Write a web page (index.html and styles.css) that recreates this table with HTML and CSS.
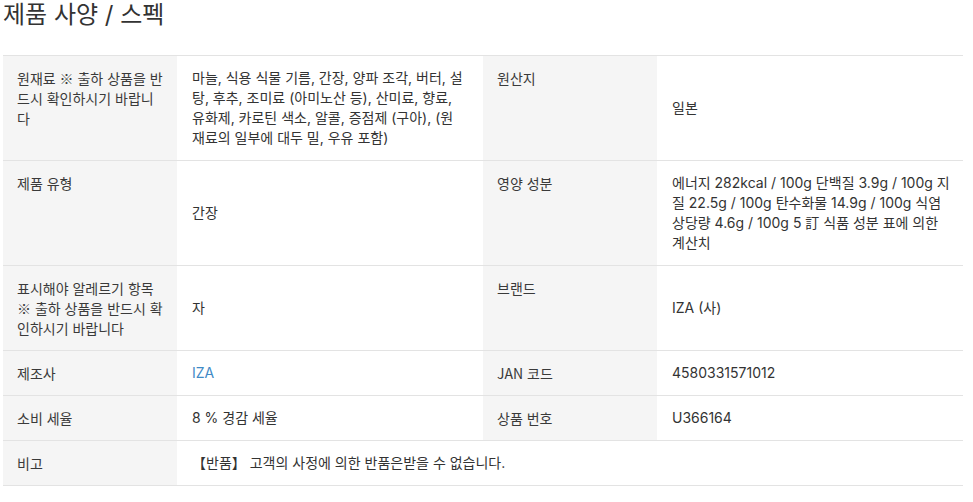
FILE: index.html
```html
<!DOCTYPE html>
<html lang="ko">
<head>
<meta charset="utf-8">
<title>제품 사양 / 스펙</title>
<link rel="stylesheet" href="styles.css">
</head>
<body>
<div class="page">
  <h2 class="title">제품 사양 / 스펙</h2>
  <table class="spec">
    <colgroup>
      <col class="c-label"><col class="c-value"><col class="c-label"><col class="c-value">
    </colgroup>
    <tr>
      <th>원재료 ※ 출하 상품을 반드시 확인하시기 바랍니다</th>
      <td>마늘, 식용 식물 기름, 간장, 양파 조각, 버터, 설탕, 후추, 조미료 (아미노산 등), 산미료, 향료, 유화제, 카로틴 색소, 알콜, 증점제 (구아), (원재료의 일부에 대두 밀, 우유 포함)</td>
      <th>원산지</th>
      <td>일본</td>
    </tr>
    <tr>
      <th>제품 유형</th>
      <td>간장</td>
      <th>영양 성분</th>
      <td class="wide">에너지 282kcal / 100g 단백질 3.9g / 100g 지질 22.5g / 100g 탄수화물 14.9g / 100g 식염 상당량 4.6g / 100g 5 訂 식품 성분 표에 의한 계산치</td>
    </tr>
    <tr>
      <th>표시해야 알레르기 항목<br>※ 출하 상품을 반드시 확인하시기 바랍니다</th>
      <td>자</td>
      <th>브랜드</th>
      <td>IZA (사)</td>
    </tr>
    <tr>
      <th>제조사</th>
      <td><a class="link" href="#">IZA</a></td>
      <th>JAN 코드</th>
      <td>4580331571012</td>
    </tr>
    <tr>
      <th>소비 세율</th>
      <td>8 % 경감 세율</td>
      <th>상품 번호</th>
      <td>U366164</td>
    </tr>
    <tr>
      <th>비고</th>
      <td colspan="3">【반품】 고객의 사정에 의한 반품은받을 수 없습니다.</td>
    </tr>
  </table>
</div>
</body>
</html>
```

FILE: styles.css
```css
body {
  margin: 0;
  font-family: Inter, "Noto Sans CJK KR", sans-serif;
  color: #333;
  background: #fff;
}

.page {
  padding: 0 10px 0 3px;
}

.title {
  margin: 0 0 25px;
  font-size: 24px;
  line-height: 30px;
  font-weight: normal;
  color: #333;
}

.spec {
  width: 960px;
  border-collapse: collapse;
  table-layout: fixed;
  font-size: 14px;
  line-height: 20px;
  border-top: 1px solid #e3e3e3;
}

.c-label {
  width: 174px;
}

.c-value {
  width: 306px;
}

.spec tr {
  border-bottom: 1px solid #e3e3e3;
}

.spec th {
  background: #f5f5f5;
  font-family: "Noto Sans CJK KR", Inter, sans-serif;
  font-weight: normal;
  text-align: left;
  vertical-align: top;
  padding: 12px 13px 12px 14px;
  color: #3a3a3a;
}

.spec td {
  vertical-align: middle;
  padding: 12px 18px 12px 15px;
  color: #333;
}

.spec td.wide {
  padding-right: 13px;
}

.link {
  color: #3f8ac6;
  text-decoration: none;
}
```
